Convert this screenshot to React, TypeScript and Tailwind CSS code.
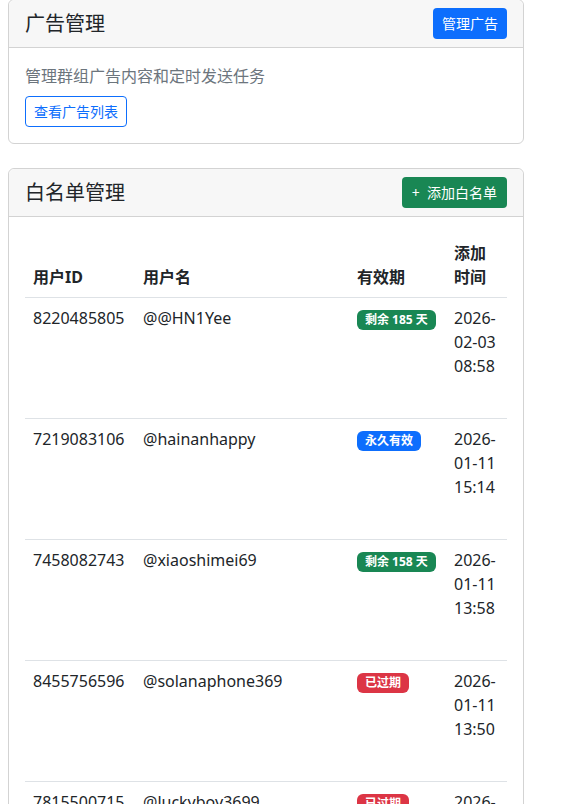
const rows = [
  { id: '8220485805', name: '@@HN1Yee', badge: '剩余 185 天', tone: 'green', date: ['2026-', '02-03', '08:58'] },
  { id: '7219083106', name: '@hainanhappy', badge: '永久有效', tone: 'blue', date: ['2026-', '01-11', '15:14'] },
  { id: '7458082743', name: '@xiaoshimei69', badge: '剩余 158 天', tone: 'green', date: ['2026-', '01-11', '13:58'] },
  { id: '8455756596', name: '@solanaphone369', badge: '已过期', tone: 'red', date: ['2026-', '01-11', '13:50'] },
  { id: '7815500715', name: '@luckyboy3699', badge: '已过期', tone: 'red', date: ['2026-', '01-11', '13:42'] },
]

const badgeTone: Record<string, string> = {
  green: 'bg-[#198754]',
  blue: 'bg-[#0d6efd]',
  red: 'bg-[#dc3545]',
}

export default function App() {
  return (
    <div className="h-[804px] overflow-hidden bg-white font-['Noto_Sans','Noto_Sans_CJK_SC',sans-serif] text-[16px] leading-[1.5] text-[#212529]">
      <div className="-mt-px ml-2 w-[516px]">
        {/* ad card */}
        <div className="rounded-[6px] border border-[#d3d3d3]">
          <div className="flex items-center justify-between rounded-t-[6px] border-b border-[#d3d3d3] bg-[#f7f7f7] px-4 py-2">
            <h5 className="text-[20px] leading-[1.2]">广告管理</h5>
            <button className="h-[31px] rounded-[4px] bg-[#0d6efd] px-[9px] text-[14px] text-white">管理广告</button>
          </div>
          <div className="p-4">
            <p className="mb-2 text-[#6c757d]">管理群组广告内容和定时发送任务</p>
            <button className="h-[31px] rounded-[4px] border border-[#0d6efd] px-2 text-[14px] text-[#0d6efd]">查看广告列表</button>
          </div>
        </div>

        {/* whitelist card */}
        <div className="mt-6 rounded-[6px] border border-[#d3d3d3]">
          <div className="flex items-center justify-between rounded-t-[6px] border-b border-[#d3d3d3] bg-[#f7f7f7] px-4 py-2">
            <h5 className="text-[20px] leading-[1.2]">白名单管理</h5>
            <button className="h-[31px] rounded-[4px] bg-[#198754] px-[10px] text-[14px] text-white">+&nbsp; 添加白名单</button>
          </div>
          <div className="p-4">
            <table className="w-[482px] table-fixed border-collapse">
              <colgroup>
                <col className="w-[110px]" />
                <col className="w-[214px]" />
                <col className="w-[97px]" />
                <col className="w-[61px]" />
              </colgroup>
              <thead>
                <tr className="border-b border-[#dee2e6]">
                  <th className="p-2 text-left align-bottom font-bold">用户ID</th>
                  <th className="p-2 text-left align-bottom font-bold">用户名</th>
                  <th className="p-2 text-left align-bottom font-bold">有效期</th>
                  <th className="p-2 text-left align-bottom font-bold">
                    添加<br />时间
                  </th>
                </tr>
              </thead>
              <tbody>
                {rows.map((r) => (
                  <tr key={r.id} className="h-[121px] border-b border-[#dee2e6]">
                    <td className="p-2 align-top">{r.id}</td>
                    <td className="p-2 align-top">{r.name}</td>
                    <td className="p-2 align-top">
                      <span
                        className={`inline-block rounded-[6px] px-[8px] py-[4px] text-[12px] font-bold leading-none text-white ${badgeTone[r.tone]}`}
                      >
                        {r.badge}
                      </span>
                    </td>
                    <td className="p-2 align-top">
                      {r.date.map((d) => (
                        <div key={d}>{d}</div>
                      ))}
                    </td>
                  </tr>
                ))}
              </tbody>
            </table>
          </div>
        </div>
      </div>
    </div>
  )
}
